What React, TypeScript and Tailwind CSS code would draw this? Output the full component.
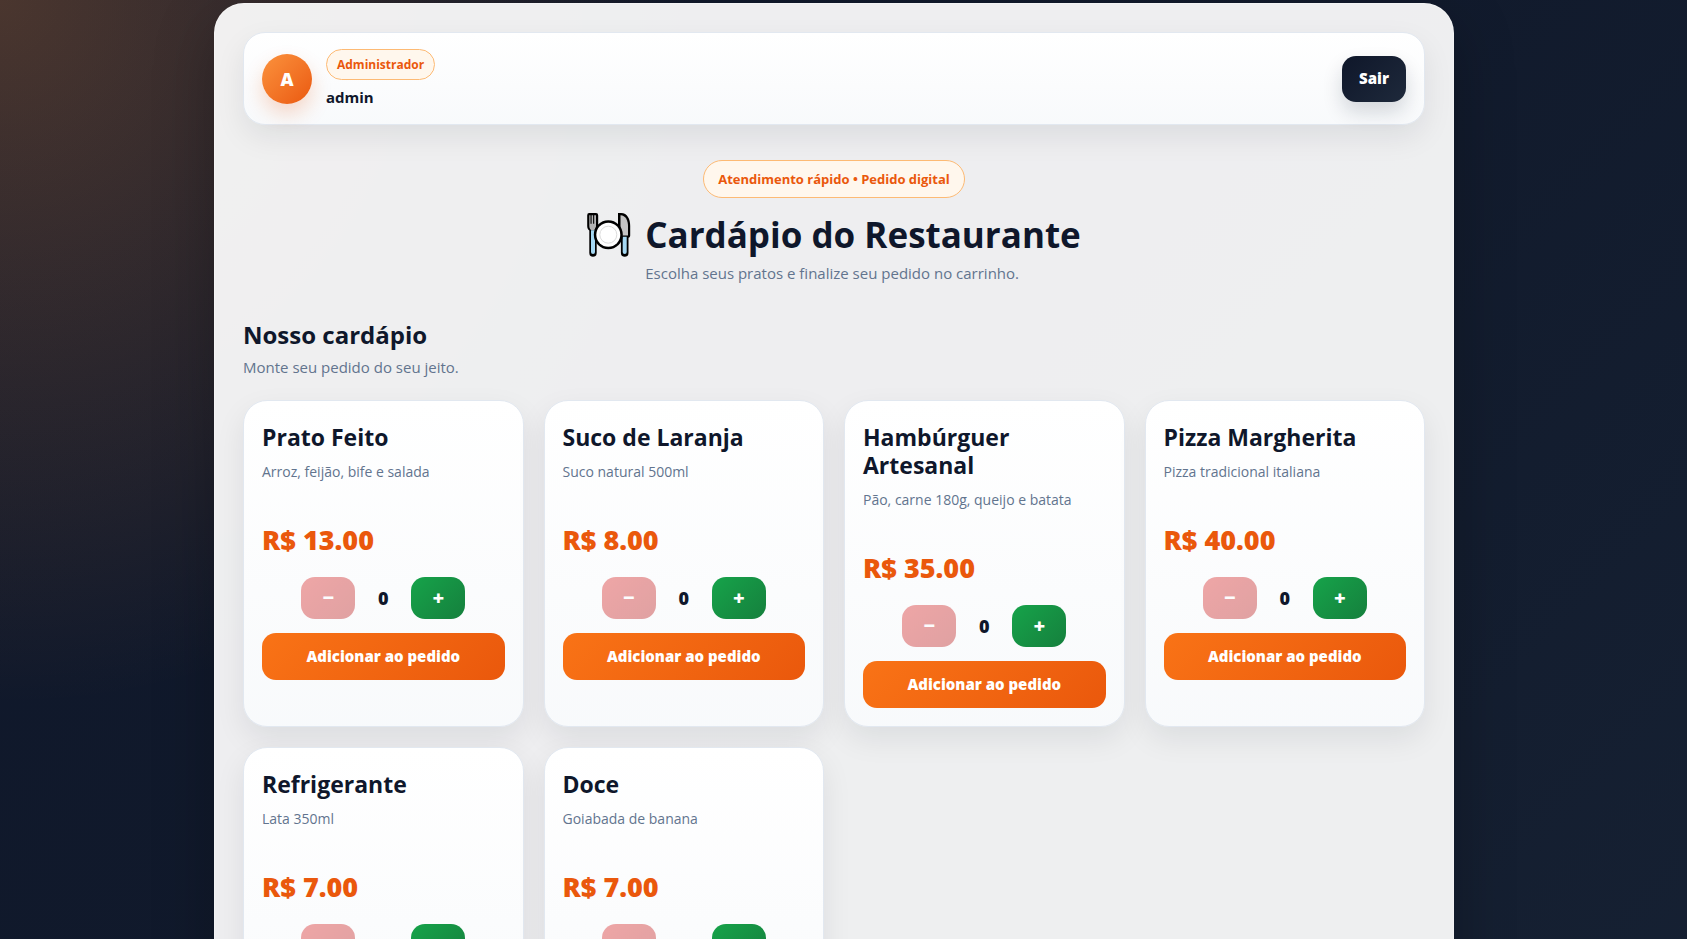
import React, { useState } from 'react';

const products = [
  { id: 1, name: 'Prato Feito', description: 'Arroz, feijão, bife e salada', price: 13 },
  { id: 2, name: 'Suco de Laranja', description: 'Suco natural 500ml', price: 8 },
  { id: 3, name: 'Hambúrguer Artesanal', description: 'Pão, carne 180g, queijo e batata', price: 35 },
  { id: 4, name: 'Pizza Margherita', description: 'Pizza tradicional italiana', price: 40 },
  { id: 5, name: 'Refrigerante', description: 'Lata 350ml', price: 7 },
  { id: 6, name: 'Doce', description: 'Goiabada de banana', price: 7 },
];

type Product = (typeof products)[number];

const PlateIcon = () => (
  <svg className="h-11 w-11 shrink-0" viewBox="0 0 44 44" aria-hidden="true">
    {/* fork */}
    <path
      d="M2.500 0H9a2.200 2.200 0 0 1 2.200 2.200V13c0 2-.5 3.600-1.500 4.600V40a3.700 3.700 0 0 1-7.400 0V17.600C1 16.600.2 15 .2 13V2.200A2.200 2.200 0 0 1 2.500 0z"
      fill="#000"
    />
    <path d="M2.300 2.200h1.200v8.500h1.100V2.200h1.500v8.500h1.100V2.200H9V13c0 2-1 3.500-2 4.300H4.300C3.200 16.500 2.300 15 2.300 13z" fill="#b3b3b3" />
    <path d="M4 17.300h4V39a2 2 0 0 1-4 0z" fill="#a5d8f3" />
    {/* knife */}
    <path
      d="M31 0h3.200c6 0 9 6 9 13v9.500c0 1.200-.6 2-1.700 2.200V40a3.800 3.800 0 0 1-7.600 0V24.500H31z"
      fill="#000"
    />
    <path d="M33.500 2.200c5 .3 7.500 5 7.500 10.800v9.500h-7.500z" fill="#c4c4c4" />
    <path d="M35.700 23.700h4V39a2 2 0 0 1-4 0z" fill="#a5d8f3" />
    {/* plate */}
    <circle cx="21.300" cy="21.700" r="14.500" fill="#000" />
    <circle cx="21.300" cy="21.700" r="12" fill="#fff" />
    <circle cx="21.300" cy="21.700" r="8.500" fill="none" stroke="#dcdcdc" strokeWidth="1" />
  </svg>
);

const ProductCard = ({ product }: { product: Product }) => {
  const [quantity, setQuantity] = useState(0);

  return (
    <article className="rounded-3xl border border-slate-200 bg-linear-to-b from-white to-slate-50 px-[18px] pt-[22px] pb-[18px] shadow-[0_12px_30px_rgba(15,23,42,0.08)]">
      <h3 className="text-[23px] leading-7 font-bold text-slate-900">{product.name}</h3>
      <p className="mt-2.5 min-h-[42px] text-sm leading-[22px] text-slate-500">{product.description}</p>
      <p className="mt-5 text-[27px] leading-[34px] font-extrabold text-[#ea580c]">R$ {product.price.toFixed(2)}</p>

      <div className="mt-5 flex items-center justify-center gap-3.5">
        <button
          type="button"
          aria-label={`Remover ${product.name}`}
          disabled={quantity === 0}
          onClick={() => setQuantity(quantity - 1)}
          className="h-[42px] w-[54px] rounded-[14px] bg-linear-135 from-[#dc2626] to-[#b91c1c] text-xl font-extrabold text-white disabled:opacity-40"
        >
          −
        </button>
        <span className="min-w-7 text-center text-lg font-extrabold text-slate-900">{quantity}</span>
        <button
          type="button"
          aria-label={`Incluir ${product.name}`}
          onClick={() => setQuantity(quantity + 1)}
          className="h-[42px] w-[54px] rounded-[14px] bg-linear-135 from-[#16a34a] to-[#15803d] text-xl font-extrabold text-white"
        >
          +
        </button>
      </div>

      <button
        type="button"
        className="mt-3.5 h-[47px] w-full rounded-[14px] bg-linear-135 from-[#f97316] to-[#ea580c] text-[15px] font-extrabold text-white"
      >
        Adicionar ao pedido
      </button>
    </article>
  );
};

const App = () => {
  return (
    <div className="min-h-screen bg-[radial-gradient(circle_at_top_left,rgba(251,146,60,0.25),transparent_35%),linear-gradient(135deg,#0f172a,#111a2c_50%,#162133)] pt-[3px] pr-[19px] pb-8 font-['Open_Sans','Noto_Sans',sans-serif]">
      <main className="mx-auto max-w-[1240px] rounded-[30px] border border-white/30 bg-white/93 p-7 shadow-[0_20px_60px_rgba(0,0,0,0.25)]">
        <header className="flex items-center justify-between rounded-[22px] border border-slate-200 bg-linear-to-b from-white to-slate-50 px-[18px] py-4 shadow-[0_12px_30px_rgba(15,23,42,0.08)]">
          <div className="flex items-center gap-3.5">
            <div className="flex h-[50px] w-[50px] items-center justify-center rounded-full bg-linear-135 from-[#fb923c] to-[#ea580c] text-lg font-extrabold text-white shadow-[0_10px_20px_rgba(234,88,12,0.22)]">
              A
            </div>
            <div className="flex flex-col items-start gap-1.5">
              <span className="rounded-full border border-[#fdba74] bg-[#fff7ed] px-2.5 py-1.5 text-xs leading-[17px] font-bold text-[#ea580c]">
                Administrador
              </span>
              <strong className="text-[15px] leading-[22px] font-bold text-slate-900">admin</strong>
            </div>
          </div>
          <button
            type="button"
            className="h-[46px] rounded-[14px] bg-linear-135 from-[#0f172a] to-[#1e293b] px-[17px] text-[15px] font-extrabold text-white shadow-[0_10px_20px_rgba(15,23,42,0.16)]"
          >
            Sair
          </button>
        </header>

        <section className="mt-[35px] flex flex-col items-center">
          <span className="rounded-full border border-[#fdba74] bg-[#fff7ed] px-3.5 py-2 text-[13px] leading-5 font-bold text-[#ea580c]">
            Atendimento rápido • Pedido digital
          </span>
          <div className="mt-[15px] flex items-start gap-3.5">
            <PlateIcon />
            <div>
              <h1 className="text-[35px] leading-[44px] font-bold text-slate-900">Cardápio do Restaurante</h1>
              <p className="mt-1 text-[15px] leading-6 text-slate-500">
                Escolha seus pratos e finalize seu pedido no carrinho.
              </p>
            </div>
          </div>
        </section>

        <section className="mt-[34px]">
          <h2 className="text-2xl leading-8 font-bold text-slate-900">Nosso cardápio</h2>
          <p className="mt-1 text-[15px] leading-6 text-slate-500">Monte seu pedido do seu jeito.</p>

          <div className="mt-[21px] grid grid-cols-1 gap-5 sm:grid-cols-2 lg:grid-cols-4">
            {products.map((product) => (
              <ProductCard key={product.id} product={product} />
            ))}
          </div>
        </section>
      </main>
    </div>
  );
};

export default App;
